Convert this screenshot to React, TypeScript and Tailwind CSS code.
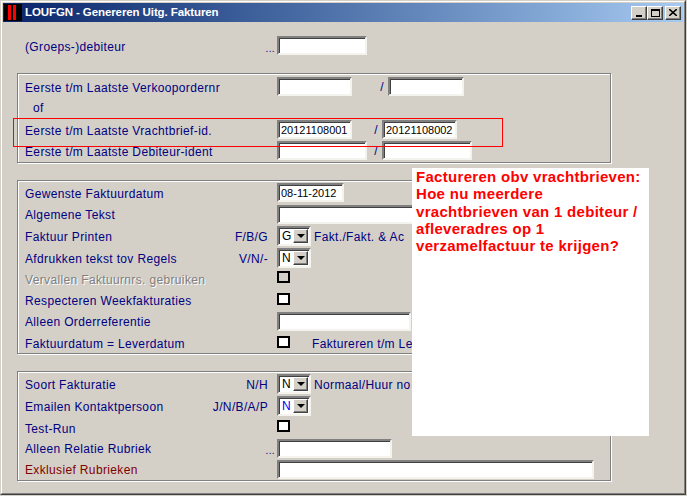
import React from "react";

const navy = "text-[#000080]";

const Input = ({ w, value = "" }: { w: number; value?: string }) => (
  <div
    className="h-[19px] bg-white border-2 border-t-[#808080] border-l-[#808080] border-b-[#f4f3ee] border-r-[#f4f3ee] shadow-[inset_1px_1px_0_#404040] flex items-center pl-[2px] pt-[1px] text-[11px] tracking-[0px] text-black whitespace-nowrap overflow-hidden"
    style={{ width: w }}
  >
    {value}
  </div>
);

const Select = ({ value, blue }: { value: string; blue?: boolean }) => (
  <div className="w-[34px] h-[20px] flex bg-white border-2 border-t-[#808080] border-l-[#808080] border-b-[#f4f3ee] border-r-[#f4f3ee] shadow-[inset_1px_1px_0_#404040]">
    <div
      className={`flex-1 flex items-center pl-[3px] text-[12px] ${
        blue ? "text-[#0000ff]" : "text-black"
      }`}
    >
      {value}
    </div>
    <div className="w-[15px] my-[1px] mr-[1px] bg-[#d4d0c8] border border-t-white border-l-white border-b-[#404040] border-r-[#404040] shadow-[inset_-1px_-1px_0_#808080] flex items-center justify-center">
      <div className="w-0 h-0 border-l-[4px] border-r-[4px] border-t-[4px] border-l-transparent border-r-transparent border-t-black" />
    </div>
  </div>
);

const Check = ({ disabled }: { disabled?: boolean }) => (
  <div
    className={`w-[13px] h-[12px] border-2 border-black ${
      disabled ? "bg-[#d4d0c8]" : "bg-white"
    }`}
  />
);

const Row = ({
  label,
  suffix,
  h,
  color = navy,
  children,
}: {
  label: string;
  suffix?: string;
  h: number;
  color?: string;
  children?: React.ReactNode;
}) => (
  <div className="flex items-center" style={{ height: h }}>
    <div className="w-[252px] flex justify-between pr-[9px] translate-y-[1px]">
      <span className={`${color} whitespace-nowrap`}>{label}</span>
      {suffix && <span className={`${navy} whitespace-nowrap`}>{suffix}</span>}
    </div>
    <div className="flex items-center">{children}</div>
  </div>
);

const Slash = ({ w }: { w: number }) => (
  <div className={`${navy} text-right pr-[4px]`} style={{ width: w }}>
    /
  </div>
);

// text next to a control; the rest of it is hidden by the white note
const SideText = ({ text, ml }: { text: string; ml: number }) => (
  <div
    className={`${navy} whitespace-nowrap translate-y-[1px]`}
    style={{ marginLeft: ml }}
  >
    {text}
  </div>
);

const Group = ({ children, cls }: { children: React.ReactNode; cls: string }) => (
  <div
    className={`ml-[14px] w-[594px] border border-[#808080] shadow-[inset_1px_1px_0_#fff,1px_1px_0_#fff] pl-[7px] ${cls}`}
  >
    {children}
  </div>
);

const TitleButton = ({ children, cls = "" }: { children: React.ReactNode; cls?: string }) => (
  <div
    className={`w-[16px] h-[14px] bg-[#d4d0c8] border border-t-white border-l-white border-b-[#404040] border-r-[#404040] shadow-[inset_-1px_-1px_0_#808080] flex items-center justify-center ${cls}`}
  >
    {children}
  </div>
);

export default function App() {
  return (
    <div className="w-[687px] h-[496px] bg-[#d4d0c8] font-['Liberation_Sans',Arial,sans-serif] text-[12px] tracking-[0.35px] overflow-hidden">
      <div className="relative w-[686px] h-[495px] border border-t-[#d4d0c8] border-l-[#d4d0c8] border-b-[#404040] border-r-[#404040]">
        <div className="h-full border border-t-white border-l-white border-b-[#808080] border-r-[#808080] p-[1px] flex flex-col">
          {/* title bar */}
          <div className="h-[19px] shrink-0 flex items-center bg-gradient-to-r from-[#0a246a] to-[#a6caf0] pl-[1px] pr-[2px]">
            <div className="w-[18px] h-[17px] bg-black flex gap-[2px] pl-[4px] pt-[1px]">
              <div className="w-[3px] h-[15px] bg-[#ff0000]" />
              <div className="w-[3px] h-[15px] bg-[#ff0000]" />
            </div>
            <div className="ml-[3px] text-white font-bold text-[11.5px] tracking-[-0.1px] whitespace-nowrap">
              LOUFGN - Genereren Uitg. Fakturen
            </div>
            <div className="ml-auto flex">
              <TitleButton>
                <div className="w-[6px] h-[2px] bg-black mt-[6px]" />
              </TitleButton>
              <TitleButton>
                <div className="w-[9px] h-[8px] border border-black border-t-2" />
              </TitleButton>
              <TitleButton cls="ml-[2px]">
                <svg width="8" height="7" viewBox="0 0 8 7">
                  <path d="M0 0 L8 7 M8 0 L0 7" stroke="black" strokeWidth="1.6" />
                </svg>
              </TitleButton>
            </div>
          </div>

          {/* content */}
          <div className="mt-[14px] pl-[22px] flex items-center h-[19px]">
            <div className="w-[252px] flex justify-between pr-[2px] translate-y-[1px]">
              <span className={navy}>(Groeps-)debiteur</span>
              <span className="text-[#000080] text-[10px] self-end">...</span>
            </div>
            <Input w={90} />
          </div>

          <Group cls="mt-[18px] pt-[3px] pb-[2px]">
            <Row label="Eerste t/m Laatste Verkoopordernr" h={19}>
              <Input w={75} />
              <Slash w={36} />
              <Input w={76} />
            </Row>
            <div className={`${navy} h-[24px] flex items-center pl-[8px]`}>of</div>
            <Row label="Eerste t/m Laatste Vrachtbrief-id." h={19}>
              <Input w={75} value="20121108001" />
              <Slash w={30} />
              <Input w={75} value="20121108002" />
            </Row>
            <div className="h-[2px]" />
            <Row label="Eerste t/m Laatste Debiteur-ident" h={19}>
              <Input w={90} />
              <Slash w={15} />
              <Input w={90} />
            </Row>
          </Group>

          <Group cls="mt-[17px] pt-[1px]">
            <Row label="Gewenste Faktuurdatum" h={21}>
              <Input w={67} value="08-11-2012" />
            </Row>
            <Row label="Algemene Tekst" h={22}>
              <Input w={300} />
            </Row>
            <Row label="Faktuur Printen" suffix="F/B/G" h={22}>
              <Select value="G" />
              <SideText text="Fakt./Fakt. & Ac" ml={3} />
            </Row>
            <Row label="Afdrukken tekst tov Regels" suffix="V/N/-" h={21}>
              <Select value="N" />
            </Row>
            <Row
              label="Vervallen Faktuurnrs. gebruiken"
              h={21}
              color="text-[#808080] [text-shadow:1px_1px_0_#fff]"
            >
              <div className="-mt-[4px]">
                <Check disabled />
              </div>
            </Row>
            <Row label="Respecteren Weekfakturaties" h={21}>
              <div className="-mt-[2px]">
                <Check />
              </div>
            </Row>
            <Row label="Alleen Orderreferentie" h={22}>
              <Input w={134} />
            </Row>
            <Row label="Faktuurdatum = Leverdatum" h={21}>
              <div className="-mt-[2px]">
                <Check />
              </div>
              <SideText text="Faktureren t/m Le" ml={22} />
            </Row>
          </Group>

          <Group cls="mt-[17px] pt-[1px]">
            <Row label="Soort Fakturatie" suffix="N/H" h={22}>
              <Select value="N" />
              <SideText text="Normaal/Huur no" ml={3} />
            </Row>
            <Row label="Emailen Kontaktpersoon" suffix="J/N/B/A/P" h={22}>
              <Select value="N" blue />
            </Row>
            <Row label="Test-Run" h={21}>
              <div className="-mt-[4px]">
                <Check />
              </div>
            </Row>
            <div className="flex items-center h-[20px]">
              <div className="w-[252px] flex justify-between pr-[2px] translate-y-[1px]">
                <span className={navy}>Alleen Relatie Rubriek</span>
                <span className="text-[#000080] text-[10px] self-end">...</span>
              </div>
              <Input w={115} />
            </div>
            <Row label="Exklusief Rubrieken" h={22} color="text-[#800000]">
              <Input w={317} />
            </Row>
          </Group>
        </div>

        {/* annotations on top of the screenshot */}
        <div className="absolute left-[12px] top-[117px] w-[490px] h-[29px] border border-[#ff0000]" />
        <div className="absolute left-[411px] top-[167px] w-[237px] h-[268px] bg-white pl-[4px] text-[#ff0000] font-bold text-[15px] leading-[17.3px] tracking-[0.3px]">
          Factureren obv vrachtbrieven:
          <br />
          Hoe nu meerdere
          <br />
          vrachtbrieven van 1 debiteur /
          <br />
          afleveradres op 1
          <br />
          verzamelfactuur te krijgen?
        </div>
      </div>
    </div>
  );
}
